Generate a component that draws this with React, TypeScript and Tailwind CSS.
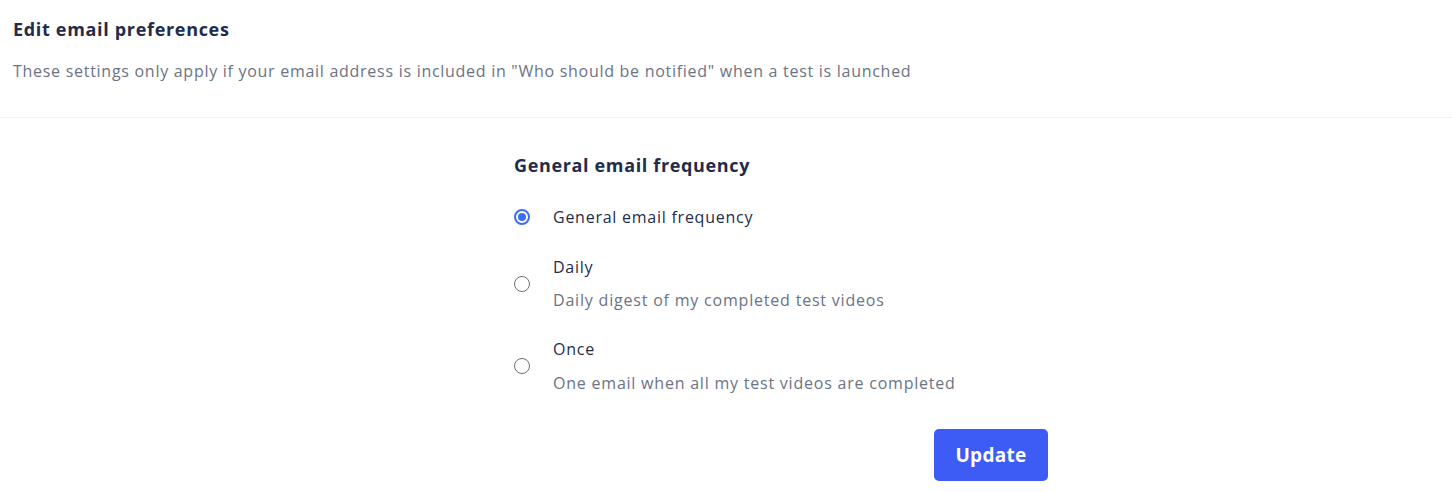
import React from "react";

function Radio({ checked }: { checked?: boolean }) {
  return checked ? (
    <span className="flex h-4 w-4 shrink-0 items-center justify-center rounded-full border-2 border-[#3b6ef5] bg-white">
      <span className="h-2 w-2 rounded-full bg-[#3b6ef5]" />
    </span>
  ) : (
    <span className="h-4 w-4 shrink-0 rounded-full border border-[#6f6f6f] bg-white" />
  );
}

export default function App() {
  const font = { fontFamily: "'Open Sans', 'Liberation Sans', sans-serif" };
  return (
    <div className="min-h-[492px] w-full bg-white" style={font}>
      <div className="border-b border-[#f1f2f4] pb-[34px] pl-[13px] pt-[15px]">
        <h1 className="text-[18px] font-bold leading-[28px] tracking-[0.68px] text-[#1f2c4b]">Edit email preferences</h1>
        <p className="mt-4 text-[16px] leading-6 tracking-[0.72px] text-[#6b7385]">
          These settings only apply if your email address is included in "Who should be notified" when a test is launched
        </p>
      </div>
      <div className="pl-[514px] pt-[33px]">
        <div className="flex w-[534px] flex-col">
          <h2 className="text-[18px] font-bold leading-[28px] tracking-[0.65px] text-[#1f2c4b]">General email frequency</h2>
          <div className="mt-[26px] flex items-center gap-[23px]">
            <Radio checked />
            <span className="text-[16px] leading-6 tracking-[0.75px] text-[#1f2c4b]">General email frequency</span>
          </div>
          <div className="mt-[26px] flex items-center gap-[23px]">
            <Radio />
            <div className="flex flex-col gap-[9px]">
              <span className="text-[16px] leading-6 tracking-[0.75px] text-[#1f2c4b]">Daily</span>
              <span className="text-[16px] leading-6 tracking-[0.8px] text-[#6b7385]">Daily digest of my completed test videos</span>
            </div>
          </div>
          <div className="mt-[25px] flex items-center gap-[23px]">
            <Radio />
            <div className="flex flex-col gap-[10px]">
              <span className="text-[16px] leading-6 tracking-[0.75px] text-[#1f2c4b]">Once</span>
              <span className="text-[16px] leading-6 tracking-[0.78px] text-[#6b7385]">One email when all my test videos are completed</span>
            </div>
          </div>
          <div className="mt-[34px] flex justify-end">
            <button className="h-[52px] w-[114px] rounded-[5px] bg-[#3d5cf5] text-[19px] font-bold tracking-[0.3px] text-white">
              Update
            </button>
          </div>
        </div>
      </div>
    </div>
  );
}
